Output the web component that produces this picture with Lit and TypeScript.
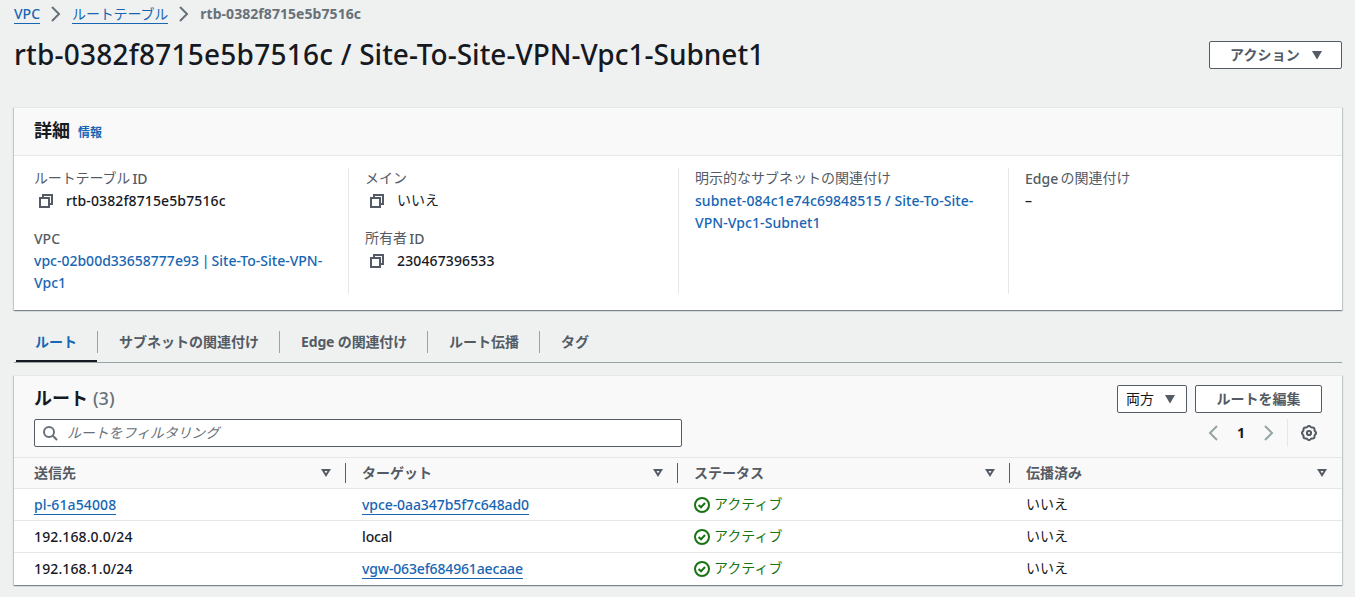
import { LitElement, html, css, svg } from "lit";
import { customElement } from "lit/decorators.js";

const icon = (body: unknown, cls = "") =>
  html`<svg class="icon ${cls}" viewBox="0 0 16 16" width="16" height="16" aria-hidden="true">${body}</svg>`;

const copyIcon = () => icon(svg`<path d="M2 5h9v9H2z"/><path d="M5 5V2h9v9h-3"/>`);
const caretFilled = () => icon(svg`<path d="M3 4h10l-5 8.4z"/>`, "filled");
const caretHollow = () => icon(svg`<path d="M4.8 5h6.4L8 10.2z"/>`);
const chevron = () => icon(svg`<path d="M4 1l7 7-7 7"/>`);
const chevronLeft = () => icon(svg`<path d="M12 1L5 8l7 7"/>`);
const searchIcon = () => icon(svg`<circle cx="7" cy="7" r="5"/><path d="M10.8 10.8l4.2 4.2"/>`);
const successIcon = () => icon(svg`<circle cx="8" cy="8" r="7"/><path d="M4.6 8l2.4 2.3L11 6"/>`);

// Eight-lobed outline of the settings gear.
const gearPath = (() => {
  let d = "";
  for (let i = 0; i <= 64; i++) {
    const a = (i / 64) * Math.PI * 2;
    const r = 6.6 + 0.5 * Math.cos(a * 8);
    d += `${i ? "L" : "M"}${(8 + r * Math.cos(a)).toFixed(2)} ${(8 + r * Math.sin(a)).toFixed(2)}`;
  }
  return d + "z";
})();
const gearIcon = () => icon(svg`<path d=${gearPath}/><circle cx="8" cy="8" r="2.1"/>`);

interface Entry { text: string; link: boolean; track: string }
const rows: { dest: Entry; target: Entry }[] = [
  { dest: { text: "pl-61a54008", link: true, track: "wide" }, target: { text: "vpce-0aa347b5f7c648ad0", link: true, track: "snug" } },
  { dest: { text: "192.168.0.0/24", link: false, track: "wide" }, target: { text: "local", link: false, track: "tight" } },
  { dest: { text: "192.168.1.0/24", link: false, track: "wide" }, target: { text: "vgw-063ef684961aecaae", link: true, track: "tight" } },
];

@customElement("app-root")
export class AppRoot extends LitElement {
  static styles = css`
    :host {
      display: block;
      box-sizing: border-box;
      height: 597px;
      padding: 3px 13px 0 14px;
      overflow: hidden;
      background: #eff1f1;
      color: #16191f;
      font: 14px/22px "Noto Sans", "Noto Sans CJK JP", sans-serif;
    }
    * { box-sizing: border-box; }
    .icon { display: block; flex: none; fill: none; stroke: currentColor; stroke-width: 2; }
    .filled { fill: currentColor; stroke: none; }
    .l { font-weight: 500; }
    .j { line-height: 20px; vertical-align: 1px; }
    .tight { letter-spacing: -0.15px; }
    .snug { letter-spacing: -0.08px; }
    .loose { letter-spacing: 0.07px; }
    .wide { letter-spacing: 0.12px; }
    .bar { letter-spacing: -0.8px; }
    .crumbs { display: flex; align-items: flex-start; height: 22px; color: #687078; }
    .crumbs .icon { margin: 3px 8px 0; }
    a { color: #1766b3; text-decoration: none; }
    .ul { display: block; height: 21px; border-bottom: 1px solid #1766b3; }
    .here { font-weight: 700; letter-spacing: 0.06px; }
    .head { display: flex; justify-content: space-between; align-items: flex-start; padding-top: 11px; height: 82px; }
    h1 { margin: 0; font-size: 28px; line-height: 36px; font-weight: 500; }
    .rid { letter-spacing: 0.23px; }
    .btn {
      display: flex; align-items: center; justify-content: center; gap: 8px; height: 28px;
      border: 1px solid #545b64; border-radius: 2px; background: #fff; color: #545b64; font-weight: 700;
    }
    .head .btn { width: 133px; margin-top: 5px; padding-left: 4px; gap: 9px; letter-spacing: 0.1px; }
    .select { width: 70px; color: #16191f; font-weight: 400; }
    .select .icon { color: #545b64; }
    .edit { width: 127px; }
    .panel {
      border-top: 1px solid #e6e9e9; background: #fff;
      box-shadow: 0 1px 1px 0 rgba(0, 28, 36, 0.3), 1px 1px 1px 0 rgba(0, 28, 36, 0.15), -1px 1px 1px 0 rgba(0, 28, 36, 0.15);
    }
    .top { display: flex; align-items: baseline; height: 48px; padding: 9px 20px 0; background: #f9f9f9; border-bottom: 1px solid #e6e8e8; }
    h2 { margin: 0; font-size: 18px; line-height: 26px; font-weight: 700; }
    .info { font-size: 12px; font-weight: 700; margin-left: 8px; }
    .cols { display: grid; grid-template-columns: repeat(4, 330px); padding: 12px 4px 16px; }
    .col { padding: 0 16px; height: 126px; }
    .col + .col { border-left: 1px solid #e6e8e8; }
    .field + .field { margin-top: 16px; }
    .label { color: #545b64; height: 22px; word-spacing: -1.4px; }
    .copy { display: flex; align-items: center; padding-left: 4px; gap: 12px; }
    .copy .icon { color: #545b64; }
    .tabs { display: flex; height: 43px; margin: 10px 0 12px; padding-left: 2px; border-bottom: 1px solid #95a5a6; color: #545b64; font-weight: 700; }
    .tab { height: 42px; padding-top: 11px; }
    .tab span { display: block; height: 22px; padding: 0 20px 0 21px; border-left: 1px solid #95a5a6; }
    .tab.on { color: #1766b3; border-bottom: 2px solid #16191f; }
    .tab.on span { padding: 0 20px 0 19px; border: 0; }
    .toolbar { height: 81px; padding: 9px 20px 0; background: #f9f9f9; }
    .line { display: flex; align-items: center; justify-content: space-between; height: 28px; }
    .line + .line { margin-top: 6px; }
    .line h2 { padding-bottom: 2px; }
    .count { font-weight: 500; color: #687078; margin-left: 5px; }
    .actions, .pager { display: flex; gap: 8px; align-items: center; }
    .search { display: flex; align-items: center; gap: 9px; width: 648px; height: 28px; padding-left: 7px; border: 1px solid #545b64; border-radius: 2px; background: #fff; color: #687078; font-style: italic; letter-spacing: -0.15px; }
    .pager { gap: 0; color: #95a5a6; }
    .pager b { color: #16191f; width: 40px; text-align: center; }
    .gear { display: flex; align-items: center; height: 28px; margin-left: 10px; padding: 0 5px 0 13px; border-left: 1px solid #e6e8e8; color: #545b64; }
    .row { display: grid; grid-template-columns: repeat(4, 332px); height: 32px; padding-top: 5px; border-bottom: 1px solid #e6e8e8; }
    .row:last-child { border: 0; }
    .cell { display: flex; align-items: flex-start; gap: 4px; padding-left: 16px; height: 22px; }
    .cell:first-child { padding-left: 20px; }
    .cell .icon { margin-top: 3px; }
    .thead { background: #f9f9f9; border-top: 1px solid #e6e8e8; color: #545b64; font-weight: 700; }
    .thead .cell { justify-content: space-between; padding-right: 11px; height: 20px; line-height: 20px; border-right: 1px solid #545b64; }
    .thead .cell .icon { margin-top: 2px; }
    .thead .cell:last-child { border: 0; padding-right: 12px; }
    .ok { color: #1a7412; }
  `;

  private cell(e: Entry) {
    return html`<div class="cell l ${e.track}">${e.link ? html`<a class="ul">${e.text}</a>` : html`<span>${e.text}</span>`}</div>`;
  }

  render() {
    return html`
      <nav class="crumbs">
        <a class="ul l">VPC</a>${chevron()}<a class="ul tight">ルートテーブル</a>${chevron()}<span class="here">rtb-0382f8715e5b7516c</span>
      </nav>
      <header class="head">
        <h1><span class="rid">rtb-0382f8715e5b7516c / </span>Site-To-Site-VPN-Vpc1-Subnet1</h1>
        <div class="btn"><span>アクション</span>${caretFilled()}</div>
      </header>
      <section class="panel">
        <div class="top"><h2>詳細</h2><a class="info">情報</a></div>
        <div class="cols">
          <div class="col">
            <div class="field"><div class="label"><span class="j tight">ルートテーブル</span> <span class="l">ID</span></div><div class="copy">${copyIcon()}<span class="l wide">rtb-0382f8715e5b7516c</span></div></div>
            <div class="field"><div class="label l">VPC</div><a class="l">vpc-02b00d33658777e93<span class="bar"> | </span>Site-To-Site-VPN-<br />Vpc1</a></div>
          </div>
          <div class="col">
            <div class="field"><div class="label"><span class="j">メイン</span></div><div class="copy">${copyIcon()}<div><span class="j">いいえ</span></div></div></div>
            <div class="field"><div class="label"><span class="j">所有者</span> <span class="l">ID</span></div><div class="copy">${copyIcon()}<span class="l wide">230467396533</span></div></div>
          </div>
          <div class="col">
            <div class="field"><div class="label"><span class="j">明示的なサブネットの関連付け</span></div><a class="l loose">subnet-084c1e74c69848515 / Site-To-Site-<br />VPN-Vpc1-Subnet1</a></div>
          </div>
          <div class="col">
            <div class="field"><div class="label"><span class="l">Edge</span> <span class="j">の関連付け</span></div><div class="l">–</div></div>
          </div>
        </div>
      </section>
      <nav class="tabs">
        <div class="tab on"><span>ルート</span></div>
        <div class="tab"><span>サブネットの関連付け</span></div>
        <div class="tab"><span class="tight">Edge の関連付け</span></div>
        <div class="tab"><span>ルート伝播</span></div>
        <div class="tab"><span>タグ</span></div>
      </nav>
      <section class="panel">
        <div class="toolbar">
          <div class="line">
            <h2><span>ルート</span><span class="count">(3)</span></h2>
            <div class="actions"><div class="btn select"><span>両方</span>${caretFilled()}</div><div class="btn edit"><span>ルートを編集</span></div></div>
          </div>
          <div class="line">
            <div class="search">${searchIcon()}<span>ルートをフィルタリング</span></div>
            <div class="pager">${chevronLeft()}<b>1</b>${chevron()}<div class="gear">${gearIcon()}</div></div>
          </div>
        </div>
        <div class="row thead">
          ${["送信先", "ターゲット", "ステータス", "伝播済み"].map((h) => html`<div class="cell"><span>${h}</span>${caretHollow()}</div>`)}
        </div>
        ${rows.map((r) => html`<div class="row">${this.cell(r.dest)}${this.cell(r.target)}
          <div class="cell ok">${successIcon()}<div><span class="j">アクティブ</span></div></div>
          <div class="cell"><div><span class="j">いいえ</span></div></div></div>`)}
      </section>
    `;
  }
}
